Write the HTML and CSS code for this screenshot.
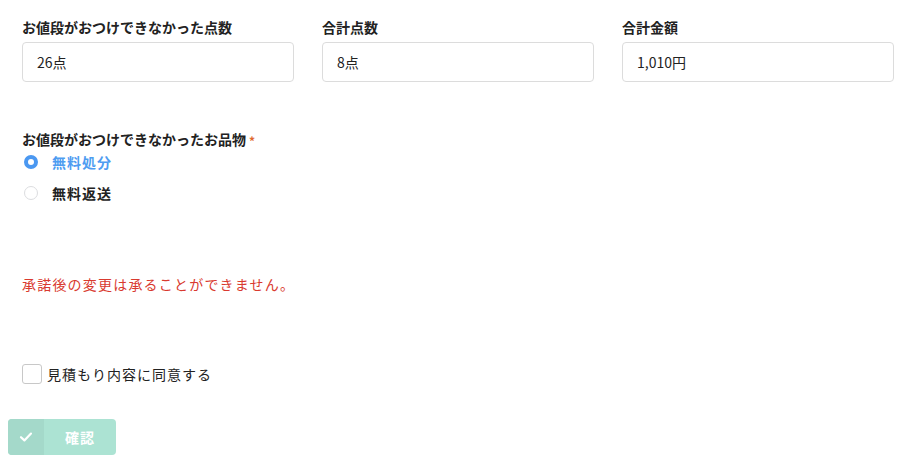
FILE: index.html
```html
<!DOCTYPE html>
<html lang="ja">
<head>
<meta charset="utf-8">
<link rel="stylesheet" href="styles.css">
</head>
<body>
<div class="page">
  <div class="fields">
    <div class="field">
      <div class="label">お値段がおつけできなかった点数</div>
      <div class="box">26点</div>
    </div>
    <div class="field">
      <div class="label">合計点数</div>
      <div class="box">8点</div>
    </div>
    <div class="field">
      <div class="label">合計金額</div>
      <div class="box">1,010円</div>
    </div>
  </div>

  <div class="group">
    <div class="label label-sm">お値段がおつけできなかったお品物<span class="req">*</span></div>
    <div class="radio checked"><span class="dot"></span><span class="rtext">無料処分</span></div>
    <div class="radio"><span class="dot"></span><span class="rtext">無料返送</span></div>
  </div>

  <p class="warn">承諾後の変更は承ることができません。</p>

  <div class="agree"><span class="check"></span><span class="atext">見積もり内容に同意する</span></div>
</div>
<div class="actions">
  <button class="btn" type="button">
    <span class="btn-icon"><svg width="14" height="14" viewBox="0 0 14 14"><path d="M2 7.2 L5.4 10.4 L12 3.6" fill="none" stroke="#fff" stroke-width="2.2" stroke-linecap="round" stroke-linejoin="round"/></svg></span>
    <span class="btn-text">確認</span>
  </button>
</div>
</body>
</html>
```
FILE: styles.css
```css
* { box-sizing: border-box; }
html, body { margin: 0; background: #fff; }
body {
  font-family: "Noto Sans CJK JP", "Noto Sans", sans-serif;
  color: #222;
  width: 908px;
  height: 466px;
  overflow: hidden;
}
.page { padding: 17px 14px 0 22px; }
.fields { display: grid; grid-template-columns: 272px 272px 272px; column-gap: 28px; }
.label { font-size: 14px; font-weight: 700; line-height: 20px; color: #222; }
.box {
  margin-top: 5px;
  height: 40px;
  border: 1px solid #dcdcdc;
  border-radius: 4px;
  padding: 0 14px;
  display: flex;
  align-items: center;
  font-size: 14px;
  color: #222;
}
.group { margin-top: 48px; }
.label-sm { line-height: 18px; }
.req { color: #e0672e; font-size: 12px; margin-left: 3px; vertical-align: middle; line-height: 14px; }
.radio { display: flex; align-items: center; height: 28px; margin-top: 3px; }
.group .label + .radio { margin-top: 0; }
.dot {
  width: 14px; height: 14px; border-radius: 50%;
  border: 1px solid #dcdde0; background: #fff;
  margin-left: 2px; margin-right: 14px; flex: none;
}
.rtext { font-size: 14px; font-weight: 700; letter-spacing: 1px; color: #222; }
.radio.checked .dot { border: 4px solid #4b98f1; background: #fff; }
.radio.checked .rtext { color: #4e9cf1; }
.warn {
  margin: 67px 0 0;
  font-size: 14px;
  line-height: 20px;
  letter-spacing: 1.2px;
  color: #d93a2f;
}
.agree { display: flex; align-items: center; height: 22px; margin-top: 69px; }
.check {
  width: 20px; height: 20px; border: 1px solid #c8c8c8; border-radius: 3px;
  margin-right: 5px; flex: none;
}
.atext { font-size: 14px; letter-spacing: 1px; color: #222; }
.actions { padding: 34px 0 0 8px; }
.btn {
  display: flex; width: 108px; height: 36px; padding: 0; border: 0;
  border-radius: 4px; overflow: hidden; background: #ace3d3;
  font-family: inherit; cursor: default;
}
.btn-icon {
  width: 36px; height: 36px; background: #a4d9ca;
  display: flex; align-items: center; justify-content: center;
}
.btn-text {
  flex: 1; display: flex; align-items: center; justify-content: center;
  color: #fff; font-size: 14px; font-weight: 700; letter-spacing: 1px;
}
```
